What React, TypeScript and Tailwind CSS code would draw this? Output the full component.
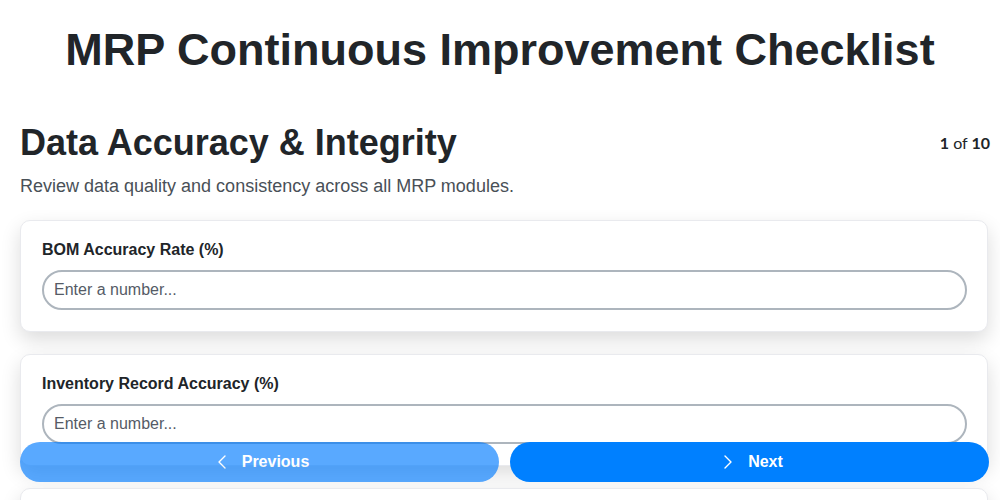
import { ChevronLeft, ChevronRight } from 'lucide-react';

const fields = [
  'BOM Accuracy Rate (%)',
  'Inventory Record Accuracy (%)',
  'Routing Accuracy Rate (%)',
];

const FieldCard = ({ label }: { label: string }) => (
  <div className="bg-white border border-[#e9eaee] rounded-[10px] shadow-[0_8px_20px_rgba(0,0,0,0.14)] pl-[21px] pr-5 pt-[17px] pb-[21px]">
    <label className="block text-base font-bold leading-6 text-[#212529] mb-2">{label}</label>
    <input
      type="number"
      placeholder="Enter a number..."
      className="w-full h-10 rounded-full border-2 border-[#adb5bd] px-[10px] text-base text-[#212529] placeholder:text-[#555b66] outline-none bg-white"
    />
  </div>
);

export default function App() {
  return (
    <div className="h-screen overflow-hidden bg-white font-['Liberation_Sans',Arial,sans-serif]">
      <h1 className="pt-6 text-center text-[45px] leading-[52px] font-bold text-[#212529]">
        MRP Continuous Improvement Checklist
      </h1>

      <div className="pl-5 pr-[10px] mt-[45px]">
        <div className="flex items-center justify-between">
          <h2 className="text-[36px] leading-[44px] font-bold text-[#212529]">Data Accuracy &amp; Integrity</h2>
          <span className="font-['Lato',sans-serif] text-base text-[#212529]">
            <b>1</b> of <b>10</b>
          </span>
        </div>
        <p className="mt-[7px] text-lg leading-7 text-[#495057]">
          Review data quality and consistency across all MRP modules.
        </p>

        <div className="mt-5 mr-[2px] flex flex-col gap-[22px]">
          {fields.map((f) => (
            <FieldCard key={f} label={f} />
          ))}
        </div>
      </div>

      <div className="fixed left-5 right-[11px] bottom-[18px] flex gap-[11px]">
        <button
          disabled
          className="flex-1 h-10 rounded-full bg-[#007bff] opacity-65 text-white font-bold text-base flex items-center justify-center gap-2"
        >
          <ChevronLeft size={24} strokeWidth={1.4} />
          Previous
        </button>
        <button className="flex-1 h-10 rounded-full bg-[#0080ff] text-white font-bold text-base flex items-center justify-center gap-2">
          <ChevronRight size={24} strokeWidth={1.4} />
          Next
        </button>
      </div>
    </div>
  );
}
